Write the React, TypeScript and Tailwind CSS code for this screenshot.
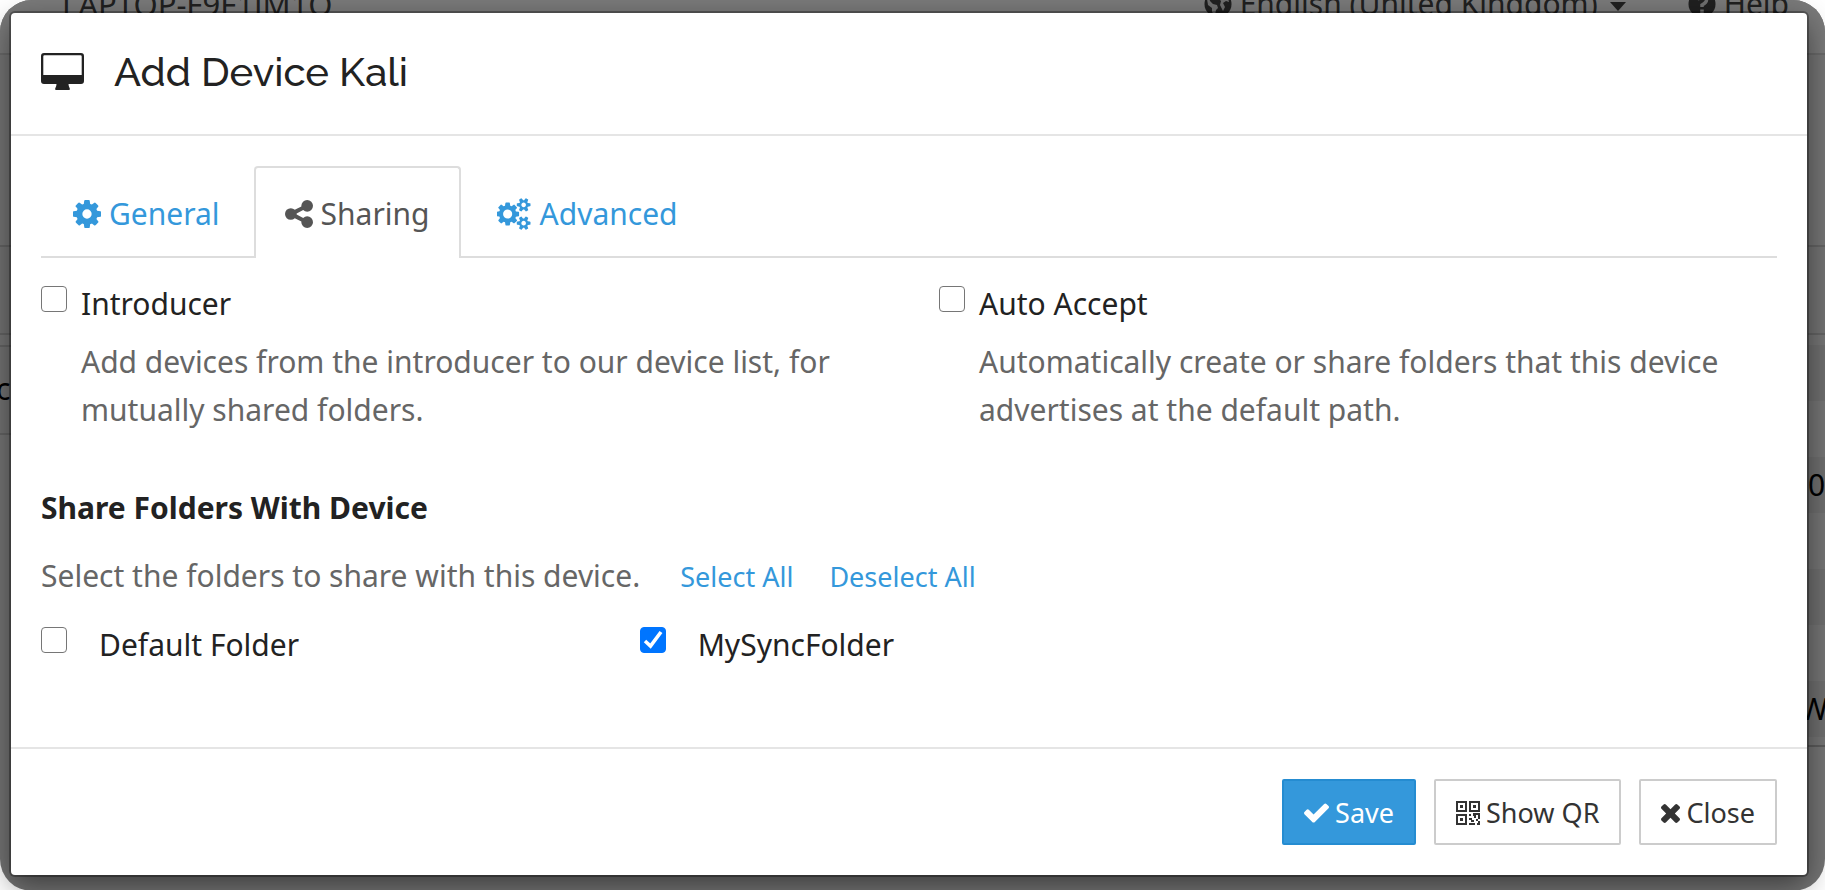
import React from "react";

type IconProps = { className?: string };

const COG =
  "M1152 896q0-106-75-181t-181-75-181 75-75 181 75 181 181 75 181-75 75-181zm512-109v222q0 12-8 23t-20 13l-185 28q-19 54-39 91 35 50 107 138 10 12 10 25t-9 23q-27 37-99 108t-94 71q-12 0-26-9l-138-108q-44 23-91 38-16 136-29 186-7 28-36 28h-222q-14 0-24.5-8.5t-11.5-21.5l-28-184q-49-16-90-37l-141 107q-10 9-25 9-14 0-25-11-126-114-165-168-7-10-7-23 0-12 8-23 15-21 51-66.5t54-70.5q-27-50-41-99l-183-27q-13-2-21-12.5t-8-23.5v-222q0-12 8-23t19-13l186-28q14-46 39-92-40-57-107-138-10-12-10-24 0-10 9-23 26-36 98.5-107.5t94.5-71.5q13 0 26 10l138 107q44-23 91-38 16-136 29-186 7-28 36-28h222q14 0 24.5 8.5t11.5 21.5l28 184q49 16 90 37l142-107q9-9 24-9 13 0 25 10 129 119 165 170 7 8 7 22 0 12-8 23-15 21-51 66.5t-54 70.5q26 50 41 98l183 28q13 2 21 12.5t8 23.5z";
const COGS =
  "M832 896q0-106-75-181t-181-75-181 75-75 181 75 181 181 75 181-75 75-181zm768 512q0-52-38-90t-90-38-90 38-38 90q0 53 37.5 90.5t90.5 37.5 90.5-37.5 37.5-90.5zm0-1024q0-52-38-90t-90-38-90 38-38 90q0 53 37.5 90.5t90.5 37.5 90.5-37.5 37.5-90.5zm-384 421v185q0 10-7 19.5t-16 10.5l-155 24q-11 35-32 76 34 48 90 115 7 11 7 20 0 12-7 19-23 30-82.5 89.5t-78.5 59.5q-11 0-21-7l-115-90q-37 19-77 31-11 108-23 155-7 24-30 24h-186q-11 0-20-7.5t-10-17.5l-23-153q-34-10-75-31l-118 89q-7 7-20 7-11 0-21-8-144-133-144-160 0-9 7-19 10-14 41-53t47-61q-23-44-35-82l-152-24q-10-1-17-9.5t-7-19.5v-185q0-10 7-19.5t16-10.5l155-24q11-35 32-76-34-48-90-115-7-11-7-20 0-12 7-20 22-30 82-89t79-59q11 0 21 7l115 90q34-18 77-32 11-108 23-154 7-24 30-24h186q11 0 20 7.5t10 17.5l23 153q34 10 75 31l118-89q8-7 20-7 11 0 21 8 144 133 144 160 0 8-7 19-12 16-42 54t-45 60q23 48 34 82l152 23q10 2 17 10.5t7 19.5zm640 533v140q0 16-149 31-12 27-30 52 51 113 51 138 0 4-4 7-122 71-124 71-8 0-46-47t-52-68q-20 2-30 2t-30-2q-14 21-52 68t-46 47q-2 0-124-71-4-3-4-7 0-25 51-138-18-25-30-52-149-15-149-31v-140q0-16 149-31 13-29 30-52-51-113-51-138 0-4 4-7 4-2 35-20t59-34 30-16q8 0 46 46.5t52 67.5q20-2 30-2t30 2q51-71 92-112l6-2q4 0 124 70 4 3 4 7 0 25-51 138 17 23 30 52 149 15 149 31zm0-1024v140q0 16-149 31-12 27-30 52 51 113 51 138 0 4-4 7-122 71-124 71-8 0-46-47t-52-68q-20 2-30 2t-30-2q-14 21-52 68t-46 47q-2 0-124-71-4-3-4-7 0-25 51-138-18-25-30-52-149-15-149-31v-140q0-16 149-31 13-29 30-52-51-113-51-138 0-4 4-7 4-2 35-20t59-34 30-16q8 0 46 46.5t52 67.5q20-2 30-2t30 2q51-71 92-112l6-2q4 0 124 70 4 3 4 7 0 25-51 138 17 23 30 52 149 15 149 31z";
const SHARE =
  "M1344 1024q133 0 226.5 93.5t93.5 226.5-93.5 226.5-226.5 93.5-226.5-93.5-93.5-226.5q0-12 2-34l-360-180q-92 86-218 86-133 0-226.5-93.5t-93.5-226.5 93.5-226.5 226.5-93.5q126 0 218 86l360-180q-2-22-2-34 0-133 93.5-226.5t226.5-93.5 226.5 93.5 93.5 226.5-93.5 226.5-226.5 93.5q-126 0-218-86l-360 180q2 22 2 34t-2 34l360 180q92-86 218-86z";
const CHECK =
  "M1671 566q0 40-28 68l-724 724-136 136q-28 28-68 28t-68-28l-136-136-362-362q-28-28-28-68t28-68l136-136q28-28 68-28t68 28l294 295 656-657q28-28 68-28t68 28l136 136q28 28 28 68z";
const TIMES =
  "M1490 1322q0 40-28 68l-136 136q-28 28-68 28t-68-28l-294-294-294 294q-28 28-68 28t-68-28l-136-136q-28-28-28-68t28-68l294-294-294-294q-28-28-28-68t28-68l136-136q28-28 68-28t68 28l294 294 294-294q28-28 68-28t68 28l136 136q28 28 28 68t-28 68l-294 294 294 294q28 28 28 68z";

function Glyph({ d, box, className }: { d: string; box: string; className: string }) {
  return (
    <svg viewBox={box} className={className} fill="currentColor" aria-hidden="true">
      <path d={d} />
    </svg>
  );
}

function DesktopIcon({ className }: IconProps) {
  return (
    <svg viewBox="0 0 43 38" className={className} fill="currentColor" aria-hidden="true">
      <path
        fillRule="evenodd"
        d="M3 0H40Q43 0 43 3V28Q43 31 40 31H27.5Q27.5 33.5 28.8 35.5Q29.3 37 27.8 37H15.2Q13.7 37 14.2 35.5Q15.5 33.5 15.5 31H3Q0 31 0 28V3Q0 0 3 0ZM3.5 2.3Q2.3 2.3 2.3 3.5V22H40.7V3.5Q40.7 2.3 39.5 2.3Z"
      />
    </svg>
  );
}

function QrIcon({ className }: IconProps) {
  return (
    <svg viewBox="0 0 24 24" className={className} fill="currentColor" aria-hidden="true">
      <path
        fillRule="evenodd"
        d="M0 0H11V11H0ZM2 2V9H9V2ZM4 4H7V7H4ZM13 0H24V11H13ZM15 2V9H22V2ZM17 4H20V7H17ZM0 13H11V24H0ZM2 15V22H9V15ZM4 17H7V20H4Z"
      />
      <path d="M13 13H15V15H13ZM17 12H24V18H22V14H20V17H18V15H17ZM13 17H16V19H18V21H15V19H13ZM13 22H19V24H13ZM20 18H22V20H20ZM22 20H24V24H21V22H22Z" />
    </svg>
  );
}

function GlobeIcon({ className }: IconProps) {
  return (
    <svg viewBox="0 0 28 28" className={className} aria-hidden="true">
      <circle cx="14" cy="14" r="13.5" fill="currentColor" />
      <path
        fill="#6f6f6f"
        d="M3 9L5 7L6 11L9 14L13 15L14 18L12 20L11 25L8 22L8 18L4 15ZM14 3L20 4L24 8L25 12L22 11L19 13L21 17L19 21L16 15L17 11L15 9L17 7Z"
      />
    </svg>
  );
}

function HelpIcon({ className }: IconProps) {
  return (
    <svg viewBox="0 0 28 28" className={className} aria-hidden="true">
      <circle cx="14" cy="14" r="13.5" fill="currentColor" />
      <path d="M9.5 10Q10.5 6 14 6Q18.5 6 18.5 10Q18.5 12.5 14 15V17M14 19.5V23" fill="none" stroke="#6f6f6f" strokeWidth="3.5" />
    </svg>
  );
}

function Backdrop() {
  return (
    <div aria-hidden="true" className="absolute inset-0 flex flex-col overflow-hidden rounded-[32px] bg-[#757575] text-[#202020]">
      <div className="flex h-[55px] shrink-0 items-start justify-between border-b-2 border-[#6a6a6a] bg-[#7a7a7a] pr-9 pl-[62px] text-[30px] leading-[36px]">
        <span className="-mt-[14px] text-[31px]">LAPTOP-F9F1JM1O</span>
        <span className="-mt-[14px] flex items-center gap-2">
          <GlobeIcon className="size-7" />
          <span>English (United Kingdom)</span>
          <span className="mt-1 ml-1 border-x-8 border-t-[9px] border-x-transparent border-t-[#202020]" />
          <HelpIcon className="ml-[54px] size-7" />
          <span>Help</span>
        </span>
      </div>
      <div className="flex flex-1 justify-between pt-[190px] text-[30px] leading-[48px] text-black">
        <div className="w-[11px]">
          <div className="h-[90px] border-y-2 border-[#646464] bg-[#737373]" />
          <div className="mt-[10px] h-[90px] border-y-2 border-[#646464] bg-[#737373] pt-[18px]">
            <span className="-ml-1">c</span>
          </div>
        </div>
        <div className="w-[17px]">
          <div className="h-[90px] border-y-2 border-[#646464] bg-[#737373]" />
          <div className="border-b-2 border-[#5c5c5c] pt-[10px]">
            <div className="h-14 bg-[#6f6f6f]" />
            <div className="h-14" />
            <div className="h-14 bg-[#6f6f6f] pt-1">0</div>
            <div className="h-14" />
            <div className="h-14 bg-[#6f6f6f]" />
            <div className="h-14" />
            <div className="h-14 bg-[#6f6f6f] pt-1">
              <span className="-ml-2">W</span>
            </div>
            <div className="h-2" />
          </div>
        </div>
      </div>
    </div>
  );
}

function Tick({ id, checked }: { id: string; checked?: boolean }) {
  const [on, setOn] = React.useState(!!checked);
  return (
    <span className="relative block size-[26px] shrink-0">
      <input
        id={id}
        type="checkbox"
        checked={on}
        onChange={() => setOn(!on)}
        className="block size-[26px] appearance-none rounded-[4px] border border-[#767676] bg-white checked:border-[#0075ff] checked:bg-[#0075ff]"
      />
      {on && (
        <svg viewBox="0 0 26 26" className="pointer-events-none absolute inset-0 size-[26px]" aria-hidden="true">
          <path d="M5 14L10.5 19L21 5" fill="none" stroke="#fff" strokeWidth="3.6" />
        </svg>
      )}
    </span>
  );
}

function Option({ id, title, children }: { id: string; title: string; children: React.ReactNode }) {
  return (
    <div className="flex gap-[14px] pr-8">
      <Tick id={id} />
      <div>
        <label htmlFor={id} className="block leading-[36px]">{title}</label>
        <p className="mt-4 text-[#666666]">{children}</p>
      </div>
    </div>
  );
}

export default function App() {
  return (
    <div className="relative min-h-screen bg-white pt-[13px] pr-[18px] pb-4 pl-[11px] font-['Noto_Sans',sans-serif] text-[30px] leading-[48px] text-[#222222]">
      <Backdrop />
      <div
        role="dialog"
        aria-labelledby="title"
        className="relative rounded-[4px] bg-white shadow-[0_0_0_2px_rgba(0,0,0,0.3),0_10px_30px_rgba(0,0,0,0.5)]"
      >
        <header className="flex h-[123px] items-start gap-[30px] border-b-2 border-[#e5e5e5] px-[30px] pt-[33px]">
          <DesktopIcon className="mt-[7px] h-[38px] w-[43px]" />
          <h1 id="title" className="font-['Raleway','Lato',sans-serif] text-[40px] leading-[52px] font-medium">Add Device Kali</h1>
        </header>
        <div className="px-[30px] pt-[30px]">
          <div role="tablist" className="flex h-[92px] border-b-2 border-[#dddddd] text-[#3498db]">
            <button role="tab" aria-selected="false" className="flex items-center gap-2 pt-[6px] pr-[34px] pl-8">
              <Glyph d={COG} box="128 128 1536 1536" className="size-7" />
              General
            </button>
            <button
              role="tab"
              aria-selected="true"
              className="-mb-[2px] flex items-center gap-2 rounded-t-[4px] border-2 border-b-0 border-[#dddddd] bg-white px-[29px] pt-[2px] text-[#555555]"
            >
              <Glyph d={SHARE} box="128 128 1536 1536" className="size-7" />
              Sharing
            </button>
            <button role="tab" aria-selected="false" className="flex items-center gap-2 px-9 pt-[6px]">
              <Glyph d={COGS} box="0 0 1920 1792" className="h-8 w-[35px]" />
              Advanced
            </button>
          </div>
          <div className="grid grid-cols-2 gap-x-[60px] pt-7">
            <Option id="introducer" title="Introducer">
              Add devices from the introducer to our device list, for mutually shared folders.
            </Option>
            <Option id="autoaccept" title="Auto Accept">
              Automatically create or share folders that this device advertises at the default path.
            </Option>
          </div>
          <h2 className="mt-[50px] font-bold">Share Folders With Device</h2>
          <div className="mt-5 flex items-baseline text-[#666666]">
            <p>Select the folders to share with this device.</p>
            <a href="#select" className="ml-10 text-[27px] text-[#3498db]">Select All</a>
            <a href="#deselect" className="ml-9 text-[27px] text-[#3498db]">Deselect All</a>
          </div>
          <div className="mt-[26px] grid grid-cols-3 gap-x-[60px]">
            <div className="flex gap-8">
              <Tick id="f-default" />
              <label htmlFor="f-default" className="leading-[36px]">Default Folder</label>
            </div>
            <div className="flex gap-8">
              <Tick id="f-sync" checked />
              <label htmlFor="f-sync" className="leading-[36px]">MySyncFolder</label>
            </div>
          </div>
        </div>
        <footer className="mt-[84px] flex justify-end gap-[18px] border-t-2 border-[#e5e5e5] p-[30px] text-[27px] leading-[36px]">
          <button className="flex h-[66px] items-center gap-[6px] rounded-[2px] border-2 border-[#258cd1] bg-[#3498db] px-5 pt-[2px] text-white">
            <Glyph d={CHECK} box="121 330 1550 1192" className="h-5 w-[25px]" />
            Save
          </button>
          <button className="flex h-[66px] items-center gap-[6px] rounded-[2px] border-2 border-[#cccccc] px-5 pt-[2px] text-[#333333]">
            <QrIcon className="size-6" />
            Show QR
          </button>
          <button className="flex h-[66px] items-center gap-[6px] rounded-[2px] border-2 border-[#cccccc] px-5 pt-[2px] text-[#333333]">
            <Glyph d={TIMES} box="302 366 1188 1188" className="size-[19px]" />
            Close
          </button>
        </footer>
      </div>
    </div>
  );
}
